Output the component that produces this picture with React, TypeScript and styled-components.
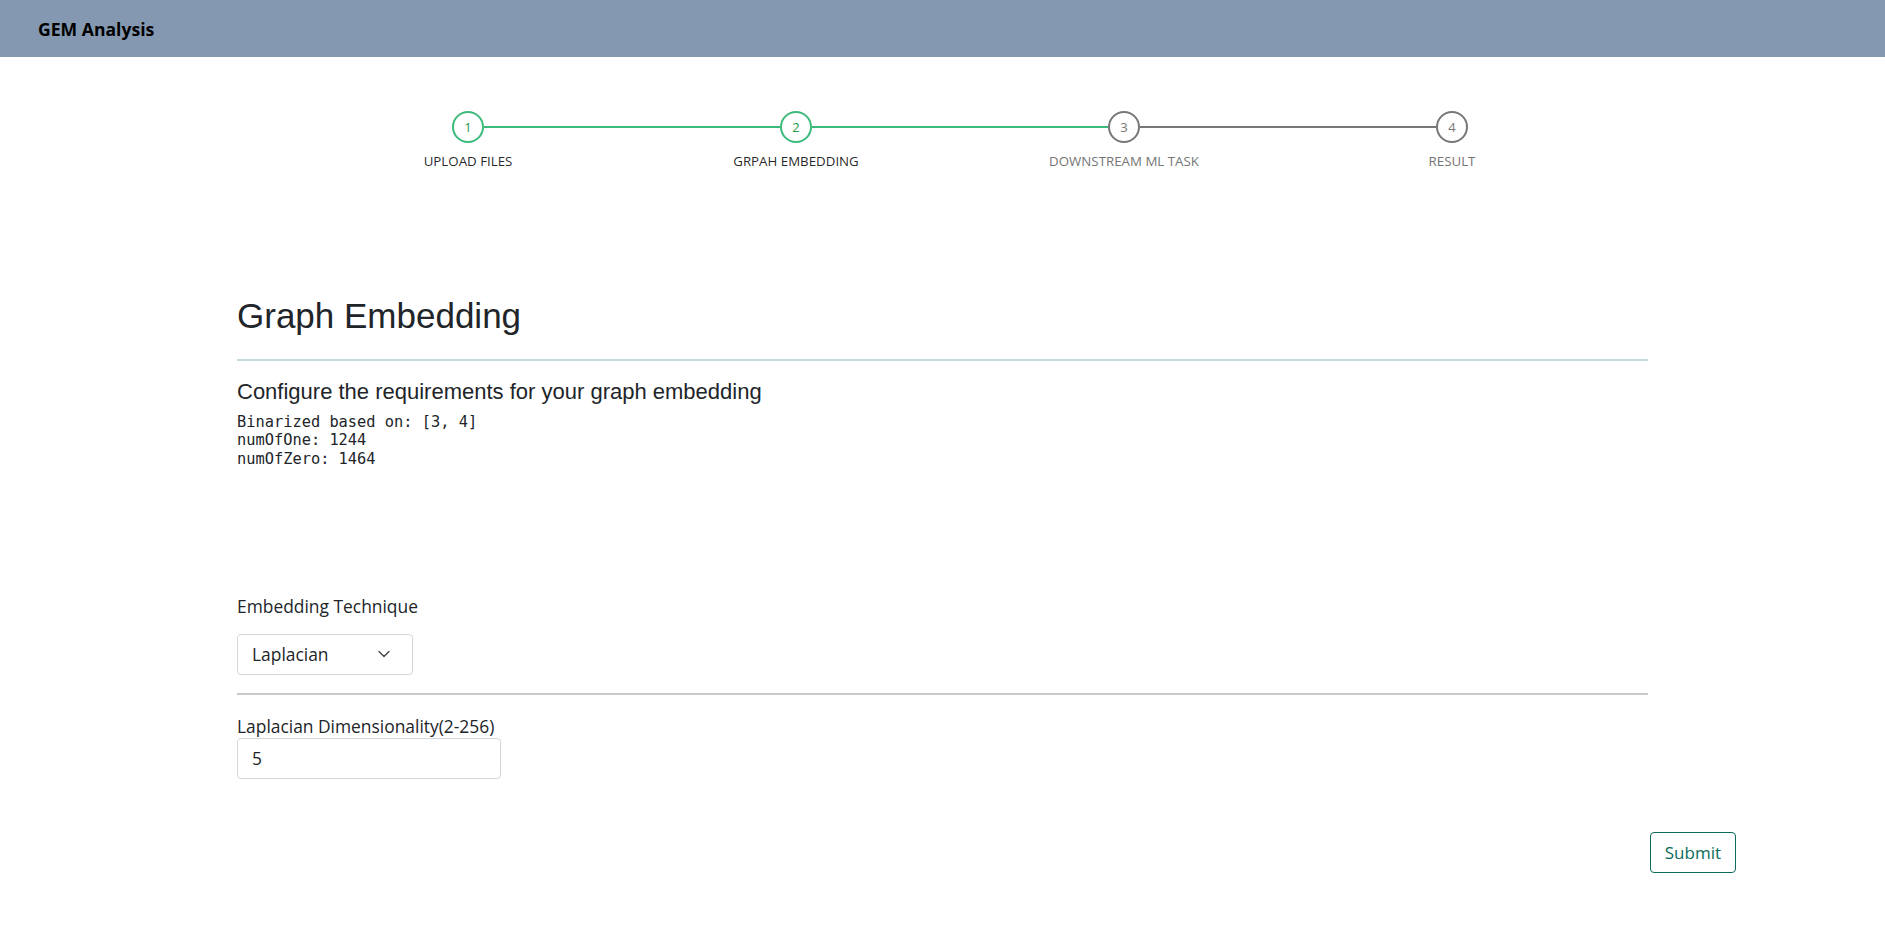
import React from 'react';
import styled, { createGlobalStyle } from 'styled-components';
import { ChevronDown } from 'lucide-react';

const GlobalStyle = createGlobalStyle`
  body {
    margin: 0;
    background: #ffffff;
    color: #212529;
    font-family: "Open Sans", "Liberation Sans", sans-serif;
  }
  * { box-sizing: border-box; }
`;

const Header = styled.header`
  height: 57px;
  background: #8499b1;
  display: flex;
  align-items: center;
  padding-left: 38px;
`;

const Brand = styled.div`
  font-weight: 700;
  font-size: 17.6px;
  color: #000;
`;

const Stepper = styled.nav`
  width: 1312px;
  margin: 54px 0 0 304px;
`;

const StepTrack = styled.div`
  display: flex;
  align-items: center;
  padding: 0 148px;
`;

const StepCircle = styled.div<{ $done: boolean }>`
  flex: none;
  width: 32px;
  height: 32px;
  border-radius: 50%;
  border: 2px solid ${(p) => (p.$done ? '#3dba7a' : '#777777')};
  color: ${(p) => (p.$done ? '#1f9a47' : '#777777')};
  display: flex;
  align-items: center;
  justify-content: center;
  font-size: 13px;
`;

const Connector = styled.div<{ $done: boolean }>`
  flex: 1;
  height: 2px;
  background: ${(p) => (p.$done ? '#3dba7a' : '#777777')};
`;

const StepLabels = styled.div`
  display: grid;
  grid-template-columns: repeat(4, 1fr);
  margin-top: 9px;
`;

const StepLabel = styled.div<{ $done: boolean }>`
  text-align: center;
  font-size: 13.3px;
  line-height: 18px;
  text-transform: uppercase;
  color: ${(p) => (p.$done ? 'rgba(0,0,0,0.87)' : '#757575')};
`;

const Content = styled.main`
  width: 1411px;
  margin: 0 auto;
`;

const Title = styled.h2`
  margin: 125px 0 22px;
  font-family: "Liberation Sans", Arial, sans-serif;
  font-weight: 400;
  font-size: 35px;
  line-height: 42px;
  color: #212529;
`;

const Rule = styled.hr<{ $tone: 'teal' | 'grey' }>`
  margin: 0;
  border: none;
  height: 2px;
  background: ${(p) => (p.$tone === 'teal' ? '#c3d9dc' : '#c9c9c9')};
`;

const Subtitle = styled.h3`
  margin: 18px 0 0;
  font-family: "Liberation Sans", Arial, sans-serif;
  font-weight: 400;
  font-size: 22px;
  line-height: 26px;
  color: #212529;
`;

const Stats = styled.pre`
  margin: 8px 0 0;
  font-family: "DejaVu Sans Mono", "Liberation Mono", monospace;
  font-size: 15.35px;
  line-height: 18.3px;
  color: #212529;
`;

const FieldLabel = styled.label<{ $gap: number }>`
  display: block;
  margin-top: ${(p) => p.$gap}px;
  font-size: 17.4px;
  line-height: 24px;
  color: #212529;
`;

const SelectBox = styled.button`
  margin: 16px 0 18px;
  width: 176px;
  height: 41px;
  display: flex;
  align-items: center;
  justify-content: space-between;
  padding: 0 18px 0 14px;
  background: #fff;
  border: 1px solid #d3d6da;
  border-radius: 4px;
  font-family: "Open Sans", sans-serif;
  font-size: 17.4px;
  color: #212529;
`;

const TextInput = styled.input`
  display: block;
  width: 264px;
  height: 41px;
  padding: 0 14px;
  border: 1px solid #d3d6da;
  border-radius: 4px;
  font-family: "Open Sans", sans-serif;
  font-size: 17.4px;
  color: #212529;
  outline: none;
`;

const Actions = styled.div`
  display: flex;
  justify-content: flex-end;
  padding-right: 149px;
  margin-top: 53px;
`;

const SubmitButton = styled.button`
  height: 41px;
  padding: 0 14px;
  background: #fff;
  border: 1px solid #0b6b5b;
  border-radius: 4px;
  color: #0b6b5b;
  font-family: "Open Sans", sans-serif;
  font-size: 17px;
`;

const steps = [
  { label: 'Upload Files', done: true },
  { label: 'Grpah Embedding', done: true },
  { label: 'Downstream ML Task', done: false },
  { label: 'Result', done: false },
];

export default function App() {
  return (
    <>
      <GlobalStyle />
      <Header>
        <Brand>GEM Analysis</Brand>
      </Header>
      <Stepper>
        <StepTrack>
          {steps.map((s, i) => (
            <React.Fragment key={s.label}>
              <StepCircle $done={s.done}>{i + 1}</StepCircle>
              {i < steps.length - 1 && <Connector $done={s.done} />}
            </React.Fragment>
          ))}
        </StepTrack>
        <StepLabels>
          {steps.map((s) => (
            <StepLabel key={s.label} $done={s.done}>{s.label}</StepLabel>
          ))}
        </StepLabels>
      </Stepper>
      <Content>
        <Title>Graph Embedding</Title>
        <Rule $tone="teal" />
        <Subtitle>Configure the requirements for your graph embedding</Subtitle>
        <Stats>{`Binarized based on: [3, 4]
numOfOne: 1244
numOfZero: 1464`}</Stats>
        <FieldLabel $gap={126}>Embedding Technique</FieldLabel>
        <SelectBox type="button">
          <span>Laplacian</span>
          <ChevronDown size={20} strokeWidth={1.6} color="#444" />
        </SelectBox>
        <Rule $tone="grey" />
        <FieldLabel $gap={19}>Laplacian Dimensionality(2-256)</FieldLabel>
        <TextInput defaultValue="5" />
      </Content>
      <Actions>
        <SubmitButton type="button">Submit</SubmitButton>
      </Actions>
    </>
  );
}
